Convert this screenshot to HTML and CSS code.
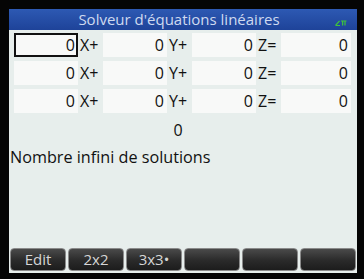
FILE: index.html
```html
<!DOCTYPE html>
<html lang="fr">
<head>
    <meta charset="UTF-8">
    <meta name="viewport" content="width=device-width, initial-scale=1.0">
    <title>Solveur d'équations linéaires</title>
    <link rel="stylesheet" href="styles.css">
</head>
<body>
    <div class="screen">
        <div class="title-bar">
            <span class="title-text">Solveur d'équations linéaires</span>
            <svg class="angle-icon" width="12" height="6" viewBox="0 0 12 6">
                <path d="M0.5 5.5 L4.5 0.8 M0.5 5.5 H5" stroke="#3ec43a" stroke-width="1.2" fill="none"/>
                <path d="M6 1 H11.5 M7.6 1 V5.6 M10 1 V5.6" stroke="#3ec43a" stroke-width="1.2" fill="none"/>
            </svg>
        </div>

        <div class="eq-grid">
            <div class="field focused">0</div><div class="var">X+</div>
            <div class="field">0</div><div class="var">Y+</div>
            <div class="field">0</div><div class="var">Z=</div>
            <div class="field">0</div>

            <div class="field">0</div><div class="var">X+</div>
            <div class="field">0</div><div class="var">Y+</div>
            <div class="field">0</div><div class="var">Z=</div>
            <div class="field">0</div>

            <div class="field">0</div><div class="var">X+</div>
            <div class="field">0</div><div class="var">Y+</div>
            <div class="field">0</div><div class="var">Z=</div>
            <div class="field">0</div>
        </div>

        <div class="result">0</div>
        <div class="message">Nombre infini de solutions</div>

        <div class="menu-bar">
            <div class="menu-key">Edit</div>
            <div class="menu-key">2x2</div>
            <div class="menu-key">3x3•</div>
            <div class="menu-key"></div>
            <div class="menu-key"></div>
            <div class="menu-key"></div>
        </div>
    </div>
</body>
</html>
```

FILE: styles.css
```css
* {
    margin: 0;
    padding: 0;
    box-sizing: border-box;
    font-family: "Open Sans", "DejaVu Sans", sans-serif;
}

body {
    background-color: #050505;
    width: 364px;
    height: 279px;
    overflow: hidden;
    padding: 9px 7px 6px 9px;
}

.screen {
    width: 348px;
    height: 264px;
    background-color: #e7eeec;
    display: flex;
    flex-direction: column;
}

.title-bar {
    height: 21px;
    background: linear-gradient(#2d59b3, #1e4399);
    display: flex;
    align-items: center;
    justify-content: center;
    position: relative;
}

.title-text {
    color: #cfdaf0;
    font-size: 15px;
    line-height: 21px;
    margin-left: -8px;
}

.angle-icon {
    position: absolute;
    right: 10px;
    top: 11px;
}

.eq-grid {
    display: grid;
    grid-template-columns: 64px 25px 64px 25px 64px 25px 70px;
    grid-auto-rows: 24px;
    row-gap: 4px;
    margin-top: 3px;
    padding-left: 5px;
}

.field {
    background-color: #f8f9f8;
    text-align: right;
    padding-right: 3px;
    font-size: 16px;
    line-height: 24px;
    color: #111;
}

.field.focused {
    border: 2px solid #111;
    line-height: 20px;
    padding-right: 1px;
}

.var {
    font-size: 16px;
    line-height: 24px;
    padding-left: 2px;
    color: #111;
}

.result {
    text-align: center;
    font-size: 16px;
    line-height: 20px;
    margin-top: 7px;
    padding-right: 10px;
    color: #111;
}

.message {
    font-size: 16.2px;
    line-height: 20px;
    margin-top: 7px;
    padding-left: 1px;
    color: #111;
}

.menu-bar {
    margin-top: auto;
    margin-bottom: 2px;
    display: grid;
    grid-template-columns: repeat(6, 1fr);
    gap: 2px;
    padding: 0 1px;
    height: 23px;
}

.menu-key {
    background: linear-gradient(#4a4a4a, #2a2a2a 55%, #1c1c1c);
    border: 1px solid #8a8a8a;
    border-radius: 4px;
    color: #d6d6d6;
    font-size: 15px;
    line-height: 21px;
    text-align: center;
}
```
